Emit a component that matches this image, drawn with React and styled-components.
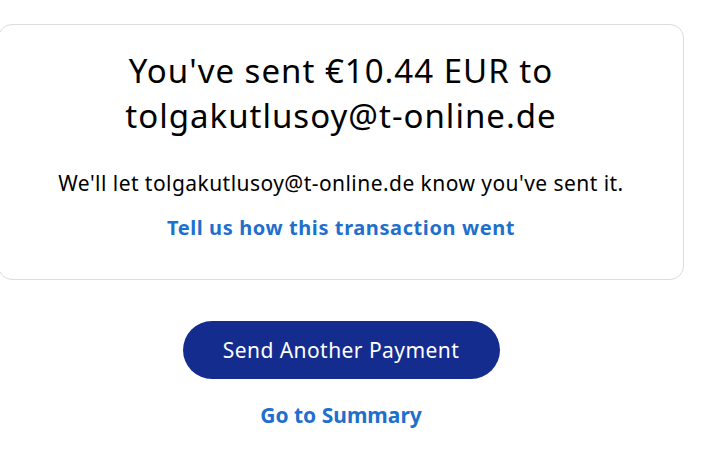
import React from 'react';
import styled, { createGlobalStyle } from 'styled-components';

const GlobalStyle = createGlobalStyle`
  html, body {
    margin: 0;
    padding: 0;
    background: #fff;
  }
  body {
    font-family: "Noto Sans", "Open Sans", sans-serif;
    color: #000;
  }
`;

const Page = styled.div`
  width: 702px;
  height: 451px;
  overflow: hidden;
  padding-top: 24px;
  box-sizing: border-box;
`;

const Column = styled.div`
  width: 686px;
  margin-left: -2px;
  box-sizing: border-box;
  display: flex;
  flex-direction: column;
  align-items: center;
`;

const Card = styled(Column)`
  height: 256px;
  border: 1px solid #dcdcdc;
  border-radius: 14px;
  padding-top: 23px;
`;

const Title = styled.h1`
  margin: 0;
  font-size: 33px;
  font-weight: 400;
  letter-spacing: 1px;
  line-height: 45px;
  text-align: center;
  width: 500px;
`;

const Message = styled.p`
  margin: 32px 0 0;
  font-size: 21px;
  letter-spacing: 0.45px;
  line-height: 26px;
`;

const LinkText = styled.a`
  display: block;
  color: #1f6fcd;
  font-weight: 700;
  font-size: ${p => p.size}px;
  letter-spacing: ${p => p.spacing || 0}px;
  line-height: ${p => p.lh}px;
  text-decoration: none;
  cursor: pointer;
  margin-top: ${p => p.top}px;
`;

const Actions = styled(Column)`
  padding-top: 41px;
`;

const PrimaryButton = styled.button`
  width: 317px;
  height: 58px;
  border: none;
  border-radius: 29px;
  background: #142c8e;
  color: #fff;
  font-family: inherit;
  font-size: 21px;
  letter-spacing: 0.45px;
  cursor: pointer;
`;

export default function App() {
  return (
    <Page>
      <GlobalStyle />
      <Card>
        <Title>You've sent €10.44 EUR to tolgakutlusoy@t-online.de</Title>
        <Message>We'll let tolgakutlusoy@t-online.de know you've sent it.</Message>
        <LinkText size={20} spacing={0.6} lh={26} top={19}>
          Tell us how this transaction went
        </LinkText>
      </Card>
      <Actions>
        <PrimaryButton>Send Another Payment</PrimaryButton>
        <LinkText size={21} lh={28} top={22}>Go to Summary</LinkText>
      </Actions>
    </Page>
  );
}
